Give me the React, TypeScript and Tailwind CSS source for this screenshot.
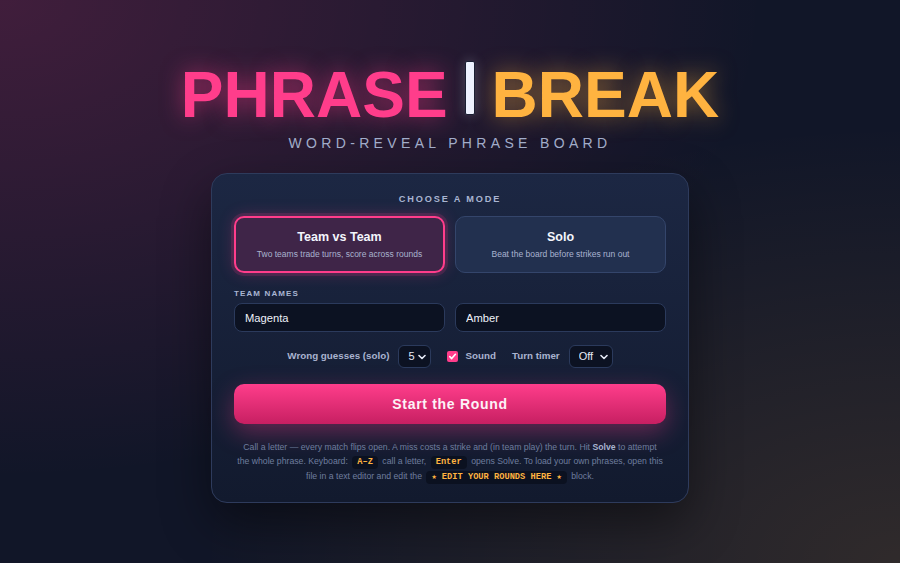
import { useState } from "react";

function Chevron() {
  return (
    <svg
      className="pointer-events-none absolute right-[5px] top-1/2 -translate-y-1/2"
      width="8"
      height="6"
      viewBox="0 0 8 6"
      fill="none"
    >
      <path d="M1 1.5 4 4.5 7 1.5" stroke="#e6ebf7" strokeWidth="1.6" strokeLinecap="round" strokeLinejoin="round" />
    </svg>
  );
}

function Select({ value, options, width }: { value: string; options: string[]; width: string }) {
  return (
    <div className={`relative ${width}`}>
      <select
        defaultValue={value}
        className="h-[23px] w-full appearance-none rounded-[6px] border border-[#2b3a5c] bg-[#0c1222] pl-[9px] text-[11px] font-normal text-[#e6ebf7] outline-none"
      >
        {options.map((o) => (
          <option key={o}>{o}</option>
        ))}
      </select>
      <Chevron />
    </div>
  );
}

function Kbd({ children }: { children: React.ReactNode }) {
  return (
    <span className="mx-[2px] inline-block rounded-[4px] bg-[#0b1120] px-[5px] py-[1px] font-['Liberation_Mono','DejaVu_Sans_Mono',monospace] text-[8.7px] leading-[11px] font-bold text-[#ffb340]">
      {children}
    </span>
  );
}

export default function App() {
  const [mode, setMode] = useState<"team" | "solo">("team");
  const [sound, setSound] = useState(true);

  const modes = [
    { id: "team" as const, title: "Team vs Team", sub: "Two teams trade turns, score across rounds" },
    { id: "solo" as const, title: "Solo", sub: "Beat the board before strikes run out" },
  ];

  return (
    <div className="flex min-h-screen w-full flex-col items-center overflow-hidden bg-[#111628] bg-[radial-gradient(ellipse_at_top_left,rgba(255,61,139,0.2),transparent_60%),radial-gradient(ellipse_at_bottom_right,rgba(255,179,64,0.13),transparent_55%)] pt-[61px] font-['Liberation_Sans',Arial,sans-serif]">
      {/* title */}
      <h1 className="flex items-center text-[64px] leading-[64px] font-bold">
        <span className="text-[#ff3d8b] [text-shadow:0_0_22px_rgba(255,61,139,0.55)]">PHRASE</span>
        <span className="mx-[17px] mb-[13px] h-[54px] w-[10px] rounded-[2px] border border-[#1a1f33] bg-[#eef2ff] shadow-[0_0_12px_rgba(238,242,255,0.25)]" />
        <span className="text-[#ffb340] [text-shadow:0_0_22px_rgba(255,179,64,0.5)]">BREAK</span>
      </h1>
      <p className="mt-[7px] text-[14px] leading-[16px] tracking-[0.31em] text-[#a3aecb]">
        WORD-REVEAL PHRASE BOARD
      </p>

      {/* card */}
      <div className="mt-[22px] w-[478px] rounded-[16px] border border-[#2e3b5c] bg-gradient-to-b from-[#1c2743] to-[#121a2e] px-[22px] pt-[19px] pb-[18px] shadow-[0_20px_50px_rgba(0,0,0,0.45)]">
        <div className="text-center text-[9.2px] leading-[12px] font-bold tracking-[0.2em] text-[#a9b5d2]">
          CHOOSE A MODE
        </div>

        <div className="mt-[11px] grid grid-cols-2 gap-[10px]">
          {modes.map((m) => {
            const active = mode === m.id;
            return (
              <button
                key={m.id}
                onClick={() => setMode(m.id)}
                className={
                  active
                    ? "flex h-[57px] flex-col items-center justify-center rounded-[10px] border-2 border-[#ff3d8b] bg-[#3f2548] shadow-[0_0_0_3px_rgba(255,61,139,0.14),0_0_16px_rgba(255,61,139,0.25)]"
                    : "flex h-[57px] flex-col items-center justify-center rounded-[10px] border-[1.5px] border-[#34456b] bg-[#22304f]"
                }
              >
                <span className="text-[12.5px] leading-[16px] font-bold text-[#f3f5fc]">{m.title}</span>
                <span className="mt-[3px] text-[8.5px] leading-[12px] text-[#a9b3cf]">{m.sub}</span>
              </button>
            );
          })}
        </div>

        <div className="mt-[16px] text-[8px] leading-[10px] font-bold tracking-[0.14em] text-[#a9b5d2]">
          TEAM NAMES
        </div>
        <div className="mt-[4px] grid grid-cols-2 gap-[10px]">
          <input
            defaultValue="Magenta"
            className="h-[29px] rounded-[8px] border border-[#2b3a5c] bg-[#0c1222] px-[10px] text-[11.2px] text-[#eef1f9] outline-none"
          />
          <input
            defaultValue="Amber"
            className="h-[29px] rounded-[8px] border border-[#2b3a5c] bg-[#0c1222] px-[10px] text-[11.2px] text-[#eef1f9] outline-none"
          />
        </div>

        <div className="mt-[13px] flex items-center justify-center text-[9.8px] font-bold text-[#a9b3cf]">
          <span>Wrong guesses (solo)</span>
          <div className="ml-[9px]">
            <Select value="5" options={["3", "4", "5", "6", "7"]} width="w-[33px]" />
          </div>
          <label className="ml-[16px] flex items-center gap-[7px]" onClick={() => setSound(!sound)}>
            <span className="flex h-[11px] w-[11px] items-center justify-center rounded-[2px] bg-[#ff3d8b]">
              {sound && (
                <svg width="9" height="9" viewBox="0 0 10 10" fill="none">
                  <path d="M2 5.2 4.1 7.3 8.2 2.6" stroke="white" strokeWidth="1.8" strokeLinecap="round" strokeLinejoin="round" />
                </svg>
              )}
            </span>
            <span>Sound</span>
          </label>
          <span className="ml-[16px]">Turn timer</span>
          <div className="ml-[9px]">
            <Select value="Off" options={["Off", "30s", "60s"]} width="w-[44px]" />
          </div>
        </div>

        <button className="mt-[16px] h-[40px] w-full rounded-[10px] bg-gradient-to-b from-[#ff3d8b] to-[#c71f62] text-[14px] font-bold tracking-[0.05em] text-[#fdf2f7] shadow-[0_8px_24px_rgba(255,61,139,0.35)]">
          Start the Round
        </button>

        <div className="-mx-[10px] mt-[16px] flex flex-col items-center text-[8.7px] leading-[14px] text-[#6f7d9e]">
          <p className="whitespace-nowrap">
            Call a letter — every match flips open. A miss costs a strike and (in team play) the turn. Hit{" "}
            <b className="text-[#a9b3cf]">Solve</b> to attempt
          </p>
          <p className="whitespace-nowrap">
            the whole phrase. Keyboard: <Kbd>A–Z</Kbd> call a letter, <Kbd>Enter</Kbd> opens Solve. To load your own
            phrases, open this
          </p>
          <p className="whitespace-nowrap">
            file in a text editor and edit the <Kbd>★ EDIT YOUR ROUNDS HERE ★</Kbd> block.
          </p>
        </div>
      </div>
    </div>
  );
}
